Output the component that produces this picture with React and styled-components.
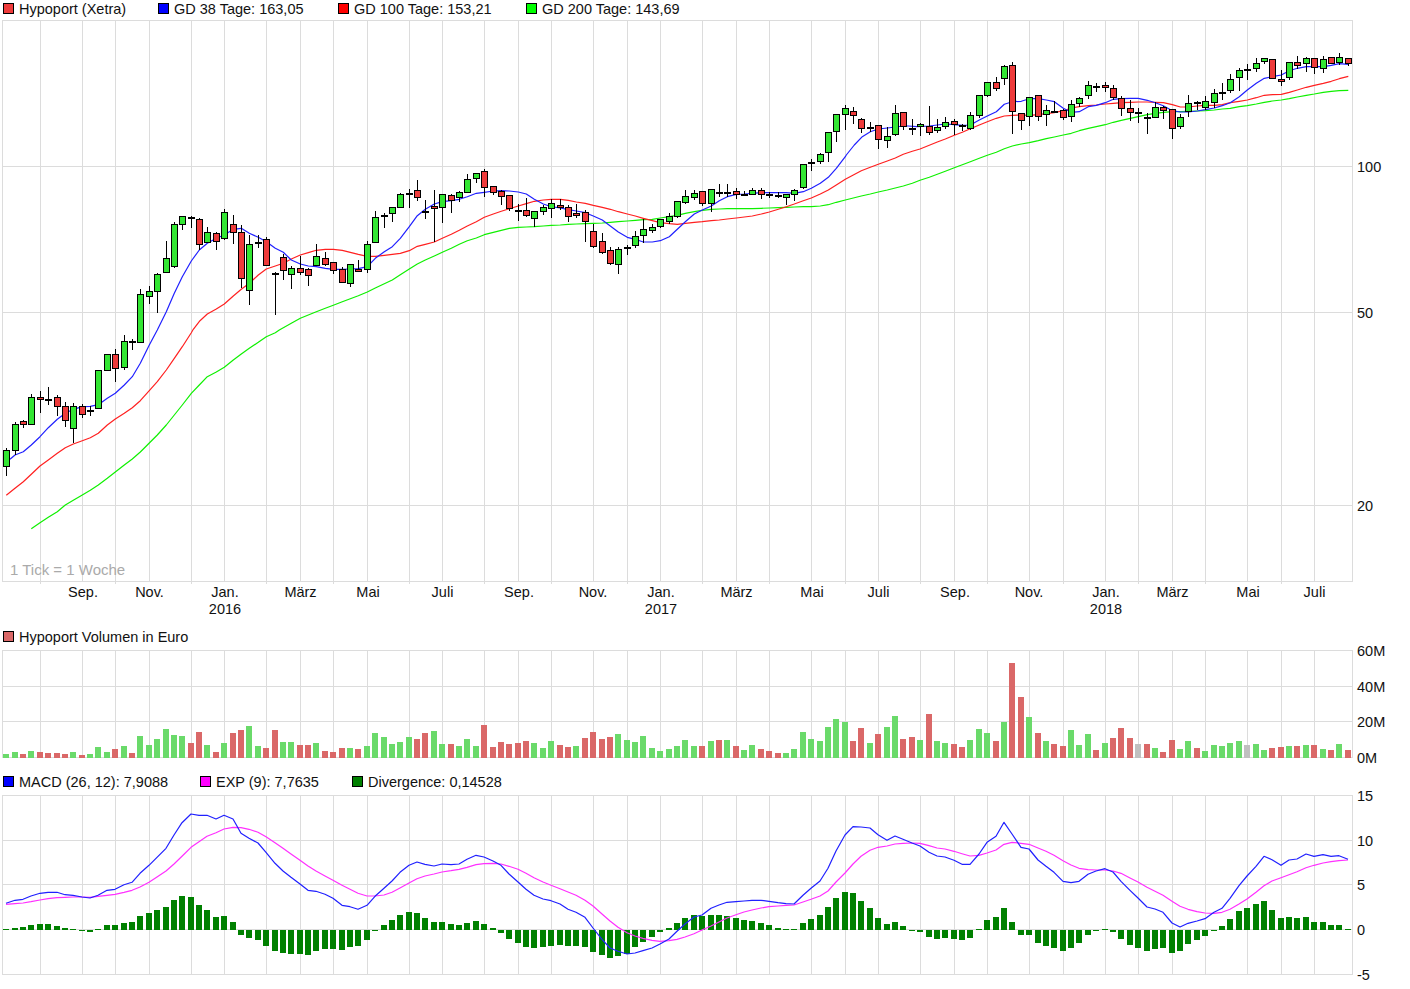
import styled, { createGlobalStyle } from "styled-components";

const GlobalStyle = createGlobalStyle`
  html, body {
    margin: 0;
    padding: 0;
    background: #fff;
  }
  #root {
    width: 1410px;
    height: 989px;
    overflow: hidden;
  }
`;

const Page = styled.div`
  width: 1410px;
  display: flex;
  flex-direction: column;
  font-family: "Liberation Sans", Arial, sans-serif;
  font-size: 14.5px;
  color: #111;
`;

const Legend = styled.div`
  display: flex;
  align-items: center;
  height: 17px;
  padding-left: 3px;
  margin-top: ${p => p.$above}px;
  margin-bottom: ${p => p.$below}px;
`;

const LegendItem = styled.div`
  display: flex;
  align-items: center;
  gap: 5px;
  width: ${p => p.$width}px;
  white-space: nowrap;
`;

const Swatch = styled.span`
  width: 11px;
  height: 11px;
  box-sizing: border-box;
  border: 1px solid #000;
  background: ${p => p.$color};
`;

const Chart = styled.svg`
  display: block;
  width: 1410px;
  flex: none;
  overflow: visible;
`;

const GridLine = styled.line`
  stroke: #dcdcdc;
  stroke-width: 1;
  shape-rendering: crispEdges;
`;

const TickLabel = styled.text`
  font-family: "Liberation Sans", Arial, sans-serif;
  font-size: 14.5px;
  fill: #111;
  text-anchor: ${p => p.$anchor || "start"};
`;

const Note = styled.text`
  font-family: "Liberation Sans", Arial, sans-serif;
  font-size: 15px;
  fill: #aaa;
`;

const Curve = styled.polyline`
  fill: none;
  stroke: ${p => p.$color};
  stroke-width: 1.2;
  stroke-linejoin: round;
`;

const Wick = styled.line`
  stroke: #000;
  stroke-width: 1;
  shape-rendering: crispEdges;
`;

const Body = styled.rect`
  fill: ${p => (p.$up ? "#33e633" : "#ee3b3b")};
  stroke: #000;
  stroke-width: 1;
  shape-rendering: crispEdges;
`;

const Doji = styled.rect`
  fill: #000;
  shape-rendering: crispEdges;
`;

const Bar = styled.rect`
  fill: ${p => p.$color};
  shape-rendering: crispEdges;
`;

// x of the n-th weekly tick
const tickX = i => Math.floor(6.7 + 8.385 * i);

// grid columns, the odd ones carry a small tick under the axis
const GRID_X = [
  40, 82, 115, 149, 191, 224, 266, 300, 333, 367, 409, 442, 484, 518, 551, 593, 627, 660, 702, 736,
  769, 811, 845, 878, 920, 954, 987, 1029, 1063, 1105, 1138, 1172, 1205, 1247, 1281, 1314,
];

const MONTHS = [
  ["Sep.", 83], ["Nov.", 149.5], ["Jan.", 225, "2016"], ["März", 300.5], ["Mai", 368], ["Juli", 442.5],
  ["Sep.", 519], ["Nov.", 593], ["Jan.", 661, "2017"], ["März", 736.5], ["Mai", 812], ["Juli", 878.5],
  ["Sep.", 955], ["Nov.", 1029], ["Jan.", 1106, "2018"], ["März", 1172.5], ["Mai", 1248], ["Juli", 1314.5],
];

// type, wick top, body top, body bottom, wick bottom
const CANDLES = [
  ["g",448,450.7,466.7,475.7],["g",422.7,424.7,450.7,455],["r",420.7,421.3,424.7,427.7],["g",394.3,397.3,424.7,424.7],
  ["r",391,397.3,399.3,413],["d",387,399.7,399.7,404.7],["r",395,397.3,406.7,416],["r",402,406.3,420.7,427],
  ["g",403.3,406.3,428.7,443],["r",404.3,406.3,414.7,417.7],["d",406.7,410.7,410.7,416],["g",370.3,370.3,408.7,409],
  ["g",354.3,354.3,370.7,370.7],["r",349,354.3,368.7,381.7],["g",335,341.3,367.3,369.7],["d",339,341.7,341.7,350],
  ["g",289.3,294.3,342.7,342.7],["g",286,291.3,296.7,304],["g",273.3,274.3,291.7,312.7],["g",241,258.3,272.7,272.7],
  ["g",222.3,224.3,266.7,268],["g",216.3,216.3,224.7,230],["d",216,217,217,228],["r",218.3,219.3,244.3,250],
  ["g",227.3,232.3,242.3,242.3],["r",232,233.3,241.3,250],["g",209.3,212.3,238.3,239.3],["r",215,224.3,232.3,243.7],
  ["r",225,232.3,278.3,288],["g",235,244.3,290.3,304.7],["d",235,242,242,247.7],["r",237.3,239.3,265.3,265.3],
  ["d",272.7,273.7,273.7,314.7],["r",254,257.3,270.3,280],["g",266.3,268.3,274.3,288.7],["r",256,268.3,272.3,274.7],
  ["r",268.3,269.3,275.3,285.7],["g",244.3,256.3,265.3,265.3],["r",252.3,258.3,264.3,265.7],["r",262.3,262.3,270.3,273.7],
  ["r",267.3,269.3,282.3,282.3],["g",264.3,264.3,283.3,286.7],["r",260,269.3,271.3,271.3],["g",241.3,244.3,269.3,272.7],
  ["g",211,217.3,242.3,242.3],["d",213,215,215,228],["g",207.3,207.3,213.3,222],["g",193.3,194.3,207.3,207.3],
  ["d",189,193.3,193.3,208],["r",180,190.3,197.3,201],["d",200,211.3,211.3,219],["r",190,206.3,208.3,241.7],
  ["g",194.3,194.3,207.3,223],["r",194.3,195.3,200.3,213],["g",191.3,192.3,197.3,201.7],["g",174,179.3,192.3,192.3],
  ["g",173.3,173.3,178.3,182.7],["r",169,171.3,187.3,196.7],["r",186.3,186.3,192.3,194.7],["r",190.7,191.3,196.3,204.7],
  ["r",195.3,195.3,208.3,210.7],["d",204.7,210,210,220.7],["r",198.3,210.3,215.7,216.7],["g",211.3,211.3,218.3,226.7],
  ["g",205.3,207.3,211.3,215],["g",199.3,203.3,208.3,217.7],["r",199.7,205.3,207.3,209.3],["r",205.3,207.3,216.3,222],
  ["r",204.3,213.3,215.3,217.3],["r",210.3,212.3,221.3,241.7],["r",224.3,231.3,246.3,247.7],["r",233.3,241.3,252.3,253.3],
  ["r",247.7,250.3,263.3,264.7],["g",247.3,249.3,264.3,273.7],["d",245,247,247,254.7],["g",231.3,236.3,245.3,247.3],
  ["g",219.3,229.3,235.3,242.7],["g",224.3,227.3,230.3,232.7],["g",219.3,219.3,226.3,227.3],["g",213.3,216.3,221.3,223.3],
  ["g",201.3,201.3,216.3,217.3],["g",190.3,196.3,202.3,203.3],["g",190.3,193.3,197.3,199.3],["r",191.3,191.3,203.3,205.7],
  ["g",189.3,189.3,203.3,211.7],["d",184.3,192,192,196.7],["d",184.3,192,192,196.7],["r",188.3,191.3,194.3,198.7],
  ["d",191.3,194.3,194.3,194.3],["g",188.3,190.3,194.3,194.3],["r",188.3,190.3,194.3,198.7],["d",192.3,194.6,194.6,197.3],
  ["d",192.3,195.3,195.3,198],["g",194.3,194.3,197.3,205],["g",189.3,190.3,194.3,200.3],["g",164.3,164.3,187.3,189],
  ["d",159,162,162,171],["g",153.3,154.3,161.3,163.3],["g",132.3,132.3,152.3,161.7],["g",114.3,114.3,131.3,141.7],
  ["g",105,108.3,114.3,129.3],["r",107.3,111.3,115.3,123.3],["r",118.3,119.3,128.3,132.3],["d",122.3,127.3,127.3,131.3],
  ["r",125.3,125.3,139.3,148.3],["g",127.3,136.3,140.3,147.3],["g",105,113.3,134.3,135.3],["r",112.3,112.3,126.3,129.7],
  ["d",119,128.3,128.3,135],["g",123.3,124.3,126.3,136],["r",106,126.7,132.3,135],["g",119,127.3,130.3,132.3],
  ["g",117.3,122.3,126.3,128.3],["r",119.3,121.3,124.3,135],["d",124.3,125.3,125.3,130.3],["g",112.3,115.3,128.3,129.3],
  ["g",95.3,95.3,115.3,117.3],["g",82.3,82.3,95.3,96.7],["r",77.3,82.3,88.3,90.3],["g",65.3,66.3,78.3,84.7],
  ["r",62.3,65.3,111.3,133.7],["r",113.3,113.3,120.3,129.7],["g",97.3,97.3,116.3,126],["r",95.3,95.3,116.3,120.3],
  ["g",105.3,110.3,114.3,125.7],["d",101.3,111.3,111.3,112.3],["r",109.3,110.3,117.3,119.3],["g",100.3,104.3,116.3,121.7],
  ["g",97.3,98.3,103.3,106.7],["g",81.3,85.3,95.3,98.7],["d",83.7,86.7,86.7,91.7],["r",82.3,85.3,87.3,91.7],
  ["r",85.3,88.3,97.3,99.3],["r",96.3,98.3,108.3,115.7],["r",100.3,108.3,112.3,120.3],["d",108.3,112.7,112.7,122.3],
  ["d",113.3,117.7,117.7,133.7],["g",102.3,107.3,117.3,117.3],["r",106.3,107.3,110.3,118.3],["r",109.3,109.3,128.3,138.7],
  ["g",114.3,117.3,126.3,128.3],["g",95.3,103.3,111.3,116.3],["d",101.3,102.7,102.7,109.3],["g",96.3,101.3,107.3,109.3],
  ["g",89.3,93.3,102.3,107.3],["d",83.3,92.3,92.3,99.7],["g",74.3,79.3,90.3,92.3],["g",68.3,70.3,77.3,90.3],
  ["d",64.3,69.7,69.7,79.3],["g",58.3,63.3,68.3,71.3],["g",58.3,58.3,61.3,63.3],["r",59.3,59.3,78.3,78.3],
  ["r",70.3,79.3,81.3,85.3],["g",62.3,62.3,77.3,79.3],["r",56,62.3,65.3,68.3],["g",57.3,58.3,63.3,71.3],
  ["r",58.3,58.3,67.3,73.3],["g",56.3,59.3,68.3,72.3],["r",57.3,57.3,63.3,63.3],["g",53.3,57.3,62.3,64.3],
  ["r",58.3,58.3,63.3,65.3],
];

// bar tops read at 3x, a negative value is a falling week
const VOLUME_A = [
  387,381,-387,378,-381,-384,-384,-387,381,-390,387,366,381,-372,363,-384,333,360,342,312,330,333,-354,-321,360,-381,354,-324,
  -315,303,363,-369,-315,351,351,-360,-360,354,-378,-381,-369,369,-372,363,324,336,357,351,336,-342,-324,318,357,-357,363,342,
];
const VOLUME_B = [
  288,-225,-291,-276,-282,-279,-273,279,294,273,-285,-291,288,-264,-246,-267,-261,252,270,276,258,294,303,297,288,270,288,-288,
  273,-270,270,-288,300,285,-297,-303,-309,309,297,246,267,273,231,207,216,-273,-234,279,-252,231,198,-267,-261,270,-192,273,
  279,-282,-291,270,237,249,-273,216,-39,-141,201,-249,273,-282,-288,240,285,252,-300,279,-264,-234,-264,-282,-282,294,-306,-270,
  297,273,-294,303,285,288,279,273,-285,282,300,-294,-291,288,-288,285,-285,297,-300,282,-300,
];
const FLAT_WEEKS = [135, 148];

const volumes = [
  ...VOLUME_A.map(v => [(399 - Math.abs(v)) / 3, v < 0]),
  ...VOLUME_B.map(v => [(324 - Math.abs(v)) / 3, v < 0]),
];

// divergence bar ends read at 3x, 418 is the zero line
const DIVERGENCE = [
  414,411,408,402,399,399,405,411,414,423,426,414,402,402,396,393,375,366,357,348,327,315,318,342,357,378,375,393,435,444,450,
  468,483,489,492,492,495,483,477,477,480,471,468,450,423,402,387,372,363,366,381,393,393,399,402,396,
  390,399,411,429,447,459,471,474,471,468,465,468,468,471,486,495,504,498,492,471,456,441,426,411,396,381,372,375,372,372,375,
  381,387,390,396,402,411,414,414,396,384,372,348,321,303,306,330,351,381,399,393,405,418,426,441,447,
  444,447,450,444,414,387,378,351,393,435,435,459,468,474,483,474,459,435,423,414,426,447,465,474,483,477,474,489,483,462,450,
  438,417,405,384,360,351,339,330,357,381,378,381,378,393,393,402,402,414,
];

// curve points come from 3x crops: origin of the crop plus x,y pairs
const crop = (ox, oy, pairs) => {
  const out = [];
  for (let i = 0; i < pairs.length; i += 2) out.push([ox + pairs[i] / 3, oy + pairs[i + 1] / 3]);
  return out;
};

const stitch = (...parts) => {
  const out = [];
  parts.flat().forEach(p => {
    if (!out.length || p[0] > out[out.length - 1][0]) out.push(p);
  });
  return out.map(p => `${p[0].toFixed(1)},${p[1].toFixed(1)}`).join(" ");
};

const GD38 = stitch(
  crop(0, 330, [30,388,45,375,70,365,94,345,120,320,145,293,172,268,196,250,220,238,247,230,271,229,295,224,322,205,346,190,373,165,397,140,421,100,448,45,472,0]),
  crop(0, 0, [499,935,523,880,547,830,574,783,598,750,622,730,649,715,673,705,700,688,724,685,748,700,775,712,799,725,826,745,850,757,874,780,901,792,925,798,949,800,976,805,1000,808,1027,808,1051,807,1075,806,1102,800,1126,775,1153,755,1177,740,1201,715,1228,680,1252,647,1276,628,1303,612,1327,605,1354,602,1378,598,1402,590]),
  crop(450, 130, [52,197,79,190,103,187,130,183,154,182,178,183,205,186,229,192,253,208,280,222,304,230,331,234,355,239,379,243,406,248,430,258,457,270,481,288,505,306,532,322,556,328,580,336,607,336,631,332,658,320,682,298,706,275,733,252,757,240,784,228,808,212,832,200,859,193,883,192,907,190,934,188,958,188,985,188,1009,188,1033,190,1060,185,1084,175,1111,160,1135,142,1159,115,1186,80]),
  crop(826, 95, [61,180,85,150,109,125,133,110,157,102,184,99,208,96,232,93]),
  crop(900, 40, [25,258,50,260,88,258,112,255,136,252,163,254,187,256,211,255,238,240,262,228,289,215,313,193,337,185,364,184,388,176,415,176,439,180,463,185,490,205,514,217,538,215,565,200,589,196,616,188,640,178,664,176,691,175,715,175,742,181,766,188,790,197,817,212,841,216,865,216,892,213,916,209,943,204,967,197,991,188,1018,170,1042,150,1069,130,1093,115,1117,110,1144,105,1168,92,1192,85,1219,80,1243,80,1270,80,1294,76,1318,71,1345,73]),
);

const GD100 = stitch(
  crop(0, 330, [19,496,45,475,70,455,94,433,120,408,145,390,172,370,196,353,220,342,247,332,271,323,295,310,322,285,346,267,373,250,397,233,421,212,448,182,472,155,499,120,523,85,547,50,574,8]),
  crop(0, 0, [580,988,600,962,622,942,649,927,673,912,700,888,724,868,748,850,775,825,799,807,826,798,850,790,874,777,901,765,925,758,949,751,976,748,1000,748,1027,751,1051,757,1075,763,1102,769,1126,769,1153,766,1177,763,1201,760,1228,752,1252,739,1276,733,1303,726,1327,715,1354,703,1378,691,1402,678]),
  crop(450, 130, [52,288,79,275,103,262,130,252,154,244,178,236,205,228,229,221,253,214,280,210,304,208,331,208,355,211,379,216,406,220,430,226,457,232,481,238,505,245,532,252,556,258,580,265,607,272,631,278,658,281,682,283,706,280,733,277,757,275,784,272,808,270,832,267,859,264,883,261,907,258,934,252,958,246,985,238,1009,230,1033,222,1060,212,1084,204,1111,192,1135,180,1159,165,1186,148,1210,135,1234,122,1261,112,1285,103,1312,93,1336,84,1360,73,1387,64,1410,57]),
  crop(900, 40, [88,316,112,306,136,297,163,286,187,277,211,266,238,255,262,245,289,235,313,228,337,226,364,225,388,226,415,224,439,221,463,218,490,212,514,204,538,200,565,197,589,195,616,192,640,190,664,188,691,187,715,186,742,186,766,187,790,188,817,194,841,201,865,201,892,198,916,196,943,196,967,194,991,188,1018,184,1042,180,1069,173,1093,166,1117,164,1144,163,1168,157,1192,150,1219,142,1243,136,1270,130,1294,124,1318,116,1345,109]),
);

const GD200 = stitch(
  crop(0, 330, [94,596,120,578,145,562,172,545,196,525,220,511,247,495,271,481,295,465,322,445,346,426,373,405,397,387,421,366,448,339,472,315,499,285,523,255,547,225,574,190,598,165,622,140,649,126,673,112,700,90,724,72,748,55,775,37,799,20,826,8]),
  crop(0, 0, [838,990,874,970,901,955,949,935,976,925,1000,916,1027,905,1051,896,1075,887,1102,876,1126,864,1153,851,1177,840,1201,824,1228,807,1252,792,1276,780,1303,768,1327,757,1354,745,1378,733,1402,722]),
  crop(450, 130, [52,335,79,324,103,314,130,307,154,301,178,295,205,292,229,291,253,290,280,288,304,286,331,285,355,283,379,282,406,281,430,280,457,279,481,277,505,275,532,273,556,271,580,269,607,268,631,264,658,260,682,256,706,250,733,245,757,241,784,238,808,237,832,236,859,236,883,236,907,236,934,235,958,234,985,233,1009,232,1033,231,1060,230,1084,230,1111,228,1135,224,1159,217,1186,210,1210,204,1234,198,1261,192,1285,186,1312,180,1336,174,1360,168,1387,160,1410,151]),
  crop(900, 40, [88,412,112,403,136,394,163,383,187,374,211,365,238,355,262,346,289,337,313,326,337,318,364,312,388,308,415,302,439,296,463,291,490,285,514,280,538,272,565,265,589,260,616,254,640,247,664,241,691,235,715,230,742,224,766,220,790,217,817,215,841,215,865,214,892,213,916,212,943,210,967,207,991,205,1018,200,1042,197,1069,192,1093,187,1117,183,1144,180,1168,176,1192,171,1219,166,1243,162,1270,157,1294,154,1318,152,1345,151]),
);

const MACD = stitch(
  crop(0, 790, [18,340,45,331,69,328,93,318,120,310,144,307,171,307,195,314,219,316,246,321,270,324,294,316,321,301,345,298,372,284,396,277,420,250,447,226,471,202,498,175,522,135,546,98,573,72,597,76,621,76,648,87,672,76,699,87,723,130,747,145,774,159,798,187,825,220,849,243,873,262,900,282,924,301,948,304,975,313,999,325,1026,346,1050,350,1074,358,1101,346,1125,319,1152,295,1176,273,1200,247,1227,226,1251,216,1275,223,1302,228,1326,222,1353,224,1377,222,1401,208]),
  crop(470, 790, [18,196,42,201,69,213,93,226,117,252,144,276,168,298,192,316,219,327,243,332,270,342,294,358,318,367,345,382,369,414,396,448,420,474,444,484,471,492,495,489,519,482,546,474,570,462,597,447,621,424,645,402,672,381,696,375,723,355,747,345,771,337,798,335,822,333,846,331,873,331,897,334,924,338,948,341,972,342,999,316,1023,295,1050,273,1074,235,1098,183,1125,135,1149,110,1173,111,1200,114,1224,134,1251,151,1275,138,1299,148,1326,159,1350,168,1377,187,1401,198]),
  crop(940, 790, [15,201,42,211,66,223,90,223,117,192,141,157,168,139,192,97,216,132,243,172,267,177,294,210,318,229,342,247,369,274,393,278,417,274,444,253,468,243,495,236,519,246,543,274,570,301,594,324,621,351,645,357,669,367,696,399,720,411,744,400,771,393,795,386,822,367,846,355,870,325,897,287,921,258,948,229,972,199,996,209,1023,226,1047,210,1071,207,1098,192,1122,199,1149,194,1173,199,1197,197,1224,208]),
);

const EXP = stitch(
  crop(0, 790, [18,343,45,341,69,339,93,335,120,330,144,326,171,323,195,322,219,321,246,321,270,322,294,319,321,316,345,313,372,307,396,301,420,291,447,277,471,261,498,243,522,222,546,199,573,172,597,155,621,139,648,128,672,117,699,112,723,113,747,118,774,127,798,140,825,158,849,175,873,192,900,211,924,228,948,243,975,258,999,271,1026,286,1050,298,1074,310,1101,318,1125,318,1152,315,1176,307,1200,294,1227,279,1251,266,1275,258,1302,252,1326,246,1353,242,1377,238,1401,232]),
  crop(470, 790, [18,224,42,221,69,220,93,222,117,229,144,238,168,250,192,263,219,276,243,286,270,296,294,306,318,316,345,331,369,348,396,372,420,393,444,412,471,428,495,438,519,445,546,451,570,454,597,452,621,448,645,441,672,431,696,420,723,408,747,396,771,384,798,374,822,366,846,360,873,354,897,350,924,348,948,346,972,345,999,336,1023,328,1050,318,1074,303,1098,276,1125,249,1149,222,1173,199,1200,181,1224,172,1251,168,1275,162,1299,160,1326,159,1350,160,1377,167,1401,174]),
  crop(940, 790, [15,177,42,184,66,191,90,198,117,196,141,189,168,180,192,163,216,157,243,160,267,163,294,174,318,184,342,196,369,212,393,225,417,235,444,239,468,240,495,240,519,243,543,250,570,264,594,276,621,292,645,304,669,316,696,334,720,349,744,358,771,365,795,369,822,370,846,367,870,358,897,342,921,327,948,307,972,287,996,273,1023,263,1047,254,1071,245,1098,233,1122,226,1149,219,1173,215,1197,212,1224,210]),
);

const Grid = ({ rows, top, bottom, ticks }) => (
  <>
    {GRID_X.map((x, i) => (
      <GridLine
        key={x}
        x1={x + 0.5}
        x2={x + 0.5}
        y1={top}
        y2={bottom + (ticks && i % 2 === 0 ? 3 : 1)}
      />
    ))}
    {[2, 1352].map(x => (
      <GridLine key={x} x1={x + 0.5} x2={x + 0.5} y1={top} y2={bottom + 1} />
    ))}
    {rows.map(y => (
      <GridLine key={y} x1={2} x2={1353} y1={y + 0.5} y2={y + 0.5} />
    ))}
  </>
);

const Candle = ({ index, type, wickTop, bodyTop, bodyBottom, wickBottom }) => {
  const x = tickX(index) + 0.5;
  const top = Math.floor(bodyTop) + 0.5;
  const bottom = Math.floor(bodyBottom) + 0.5;
  return (
    <>
      <Wick x1={x} x2={x} y1={Math.floor(wickTop)} y2={Math.ceil(wickBottom)} />
      {type === "d" ? (
        <Doji x={x - 3.5} y={Math.floor(bodyTop)} width={7} height={2} />
      ) : (
        <Body x={x - 3} y={top} width={6} height={bottom - top} $up={type === "g"} />
      )}
    </>
  );
};

const PriceChart = () => (
  <Chart viewBox="0 20 1410 600" height="600">
    <Grid rows={[20, 166, 312, 505, 581]} top={20} bottom={581} ticks />
    <Curve $color="#0ff000" points={GD200} />
    <Curve $color="#ff2020" points={GD100} />
    <Curve $color="#2020ff" points={GD38} />
    {CANDLES.map(([type, wickTop, bodyTop, bodyBottom, wickBottom], i) => (
      <Candle
        key={i}
        index={i}
        type={type}
        wickTop={wickTop}
        bodyTop={bodyTop}
        bodyBottom={bodyBottom}
        wickBottom={wickBottom}
      />
    ))}
    <Note x={10} y={575}>1 Tick = 1 Woche</Note>
    {[["100", 172], ["50", 318], ["20", 511]].map(([label, y]) => (
      <TickLabel key={label} x={1357} y={y}>{label}</TickLabel>
    ))}
    {MONTHS.map(([label, x, year]) => (
      <g key={`${label}${x}`}>
        <TickLabel x={x} y={597} $anchor="middle">{label}</TickLabel>
        {year && <TickLabel x={x} y={614} $anchor="middle">{year}</TickLabel>}
      </g>
    ))}
  </Chart>
);

const VolumeChart = () => (
  <Chart viewBox="0 650 1410 120" height="120">
    <Grid rows={[650, 686, 721, 757]} top={650} bottom={757} />
    {volumes.map(([h, falling], i) => {
      const flat = FLAT_WEEKS.includes(i);
      return (
        <Bar
          key={i}
          x={tickX(i) - 3}
          y={758 - h}
          width={6}
          height={h}
          $color={flat ? "#c0c0c0" : falling ? "#da6868" : "#6ada6a"}
        />
      );
    })}
    {[["60M", 656], ["40M", 692], ["20M", 727], ["0M", 763]].map(([label, y]) => (
      <TickLabel key={label} x={1357} y={y}>{label}</TickLabel>
    ))}
  </Chart>
);

const MacdChart = () => (
  <Chart viewBox="0 795 1410 194" height="194">
    <Grid rows={[795, 840, 884, 929, 974]} top={795} bottom={974} />
    {DIVERGENCE.map((end, i) => {
      const h = Math.abs(418 - end) / 3;
      return (
        <Bar
          key={i}
          x={tickX(i) - 3}
          y={end < 418 ? 930 - h : 929.5}
          width={6}
          height={Math.max(h, 1)}
          $color="#008000"
        />
      );
    })}
    <Curve $color="#ff30ff" points={EXP} />
    <Curve $color="#2020ff" points={MACD} />
    {[["15", 801], ["10", 846], ["5", 890], ["0", 935], ["-5", 980]].map(([label, y]) => (
      <TickLabel key={label} x={1357} y={y}>{label}</TickLabel>
    ))}
  </Chart>
);

const LegendRow = ({ items, above, below }) => (
  <Legend $above={above} $below={below}>
    {items.map(([color, label, width]) => (
      <LegendItem key={label} $width={width}>
        <Swatch $color={color} />
        {label}
      </LegendItem>
    ))}
  </Legend>
);

export default function App() {
  return (
    <Page>
      <GlobalStyle />
      <LegendRow
        above={0}
        below={3}
        items={[
          ["#ee3b3b", "Hypoport (Xetra)", 155],
          ["#0000ff", "GD 38 Tage: 163,05", 180],
          ["#ff0000", "GD 100 Tage: 153,21", 188],
          ["#00ff00", "GD 200 Tage: 143,69", 180],
        ]}
      />
      <PriceChart />
      <LegendRow above={8} below={5} items={[["#da6868", "Hypoport Volumen in Euro", 300]]} />
      <VolumeChart />
      <LegendRow
        above={3}
        below={5}
        items={[
          ["#0000ff", "MACD (26, 12): 7,9088", 197],
          ["#ff00ff", "EXP (9): 7,7635", 152],
          ["#008000", "Divergence: 0,14528", 200],
        ]}
      />
      <MacdChart />
    </Page>
  );
}
